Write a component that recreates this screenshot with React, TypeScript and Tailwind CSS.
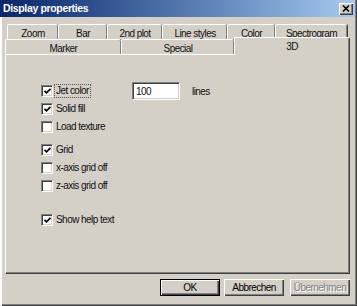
import React from 'react';

const font = "font-['Liberation_Sans',Arial,sans-serif]";

const rowOneTabs = [
  { label: 'Zoom', w: 'w-[51px]' },
  { label: 'Bar', w: 'w-[49px]' },
  { label: '2nd plot', w: 'w-[55px]' },
  { label: 'Line styles', w: 'w-[65px]' },
  { label: 'Color', w: 'w-[48px]' },
  { label: 'Spectrogram', w: 'w-[72px]' },
];

function CheckMark() {
  return (
    <svg width="9" height="9" viewBox="0 0 9 9">
      <path d="M1.5 3.8 L3.5 5.8 L7.5 1.8" fill="none" stroke="#000" strokeWidth={1.7} />
    </svg>
  );
}

function CheckBox({ label, checked, focused }: { label: string; checked: boolean; focused?: boolean }) {
  return (
    <div className="flex items-center h-[18px]">
      <span className="w-[12px] h-[12px] bg-white border border-t-[#808080] border-l-[#808080] border-r-white border-b-white shadow-[inset_1px_1px_0_#404040,inset_-1px_-1px_0_#d4d0c8] flex items-center justify-center">
        {checked && <CheckMark />}
      </span>
      <span
        className={
          'ml-[1px] px-[1px] leading-[12px] ' +
          (focused ? 'border border-dotted border-[#555]' : 'border border-transparent')
        }
      >
        {label}
      </span>
    </div>
  );
}

function Button({ label, isDefault, disabled }: { label: string; isDefault?: boolean; disabled?: boolean }) {
  return (
    <div className={'w-[60px] h-[17px] ' + (isDefault ? 'border border-black' : '')}>
      <div className="w-full h-full bg-[#d4d0c8] shadow-[inset_1px_1px_0_#fff,inset_-1px_-1px_0_#404040,inset_-2px_-2px_0_#808080] flex items-center justify-center">
        <span className={disabled ? 'text-[#808080] [text-shadow:1px_1px_0_#fff]' : 'text-black'}>{label}</span>
      </div>
    </div>
  );
}

export default function App() {
  return (
    <div
      className={
        'w-[357px] h-[306px] bg-[#d4d0c8] text-[10px] tracking-[-0.55px] text-[#111] overflow-hidden shadow-[inset_2px_0_0_#fff,inset_-1px_-1px_0_#404040,inset_-2px_-2px_0_#808080] ' +
        font
      }
    >
      {/* Title bar */}
      <div className="h-[17px] mr-[2px] bg-gradient-to-r from-[#0a246a] to-[#a6caf0] flex items-center justify-between pl-[3px] pr-[2px]">
        <span className="text-white font-bold text-[10.5px] tracking-[-0.35px]">Display properties</span>
        <div className="w-[14px] h-[12px] bg-[#d4d0c8] shadow-[inset_1px_1px_0_#fff,inset_-1px_-1px_0_#404040,inset_-2px_-2px_0_#808080] flex items-center justify-center">
          <svg width="8" height="7" viewBox="0 0 8 7">
            <path d="M1 0.5 L7 6.5 M7 0.5 L1 6.5" stroke="#000" strokeWidth={1.6} />
          </svg>
        </div>
      </div>

      {/* Back tab row */}
      <div className="mt-[7px] ml-[7px] flex h-[14px]">
        {rowOneTabs.map((t) => (
          <div
            key={t.label}
            className={
              t.w +
              ' h-[16px] border-t border-l border-white rounded-tl-[2px] rounded-tr-[2px] shadow-[inset_-1px_0_0_#808080,1px_0_0_#404040] flex justify-center pt-[3px] leading-[11px]'
            }
          >
            {t.label}
          </div>
        ))}
      </div>

      {/* Front tab row */}
      <div className="ml-[5px] flex items-end h-[16px] relative">
        <div className="w-[116px] h-[15px] bg-[#d4d0c8] border-t border-l border-white rounded-tl-[2px] rounded-tr-[2px] shadow-[inset_-1px_0_0_#808080,1px_0_0_#404040] flex justify-center pt-[3px] leading-[11px]">
          Marker
        </div>
        <div className="w-[113px] h-[15px] bg-[#d4d0c8] border-t border-l border-white rounded-tl-[2px] rounded-tr-[2px] shadow-[inset_-1px_0_0_#808080,1px_0_0_#404040] flex justify-center pt-[3px] leading-[11px]">
          Special
        </div>
        <div className="relative z-10 w-[116px] h-[18px] -mb-[1px] bg-[#d4d0c8] border-t border-l border-white rounded-tl-[2px] rounded-tr-[2px] shadow-[inset_-1px_0_0_#808080,inset_-2px_0_0_#d4d0c8] border-r border-r-[#404040] flex justify-center pt-[3px] leading-[11px]">
          3D
        </div>
      </div>

      {/* Page */}
      <div className="ml-[5px] w-[345px] h-[220px] border border-t-white border-l-white border-r-[#404040] border-b-[#404040] shadow-[inset_-1px_-1px_0_#808080] pt-[27px] pl-[35px]">
        <div className="flex">
          <div className="w-[91px]">
            <CheckBox label="Jet color" checked focused />
            <CheckBox label="Solid fill" checked />
            <CheckBox label="Load texture" checked={false} />
          </div>
          <div className="w-[48px] h-[18px] bg-white border border-t-[#808080] border-l-[#808080] border-r-white border-b-white shadow-[inset_1px_1px_0_#404040,inset_-1px_-1px_0_#d4d0c8] flex items-center pl-[3px]">
            100
          </div>
          <div className="ml-[12px] h-[18px] flex items-center">lines</div>
        </div>

        <div className="mt-[5px]">
          <CheckBox label="Grid" checked />
          <CheckBox label="x-axis grid off" checked={false} />
          <CheckBox label="z-axis grid off" checked={false} />
        </div>

        <div className="mt-[16px]">
          <CheckBox label="Show help text" checked />
        </div>
      </div>

      {/* Buttons */}
      <div className="mt-[5px] flex pl-[160px]">
        <Button label="OK" isDefault />
        <div className="ml-[4px]">
          <Button label="Abbrechen" />
        </div>
        <div className="ml-[6px]">
          <Button label="Übernehmen" disabled />
        </div>
      </div>
    </div>
  );
}
